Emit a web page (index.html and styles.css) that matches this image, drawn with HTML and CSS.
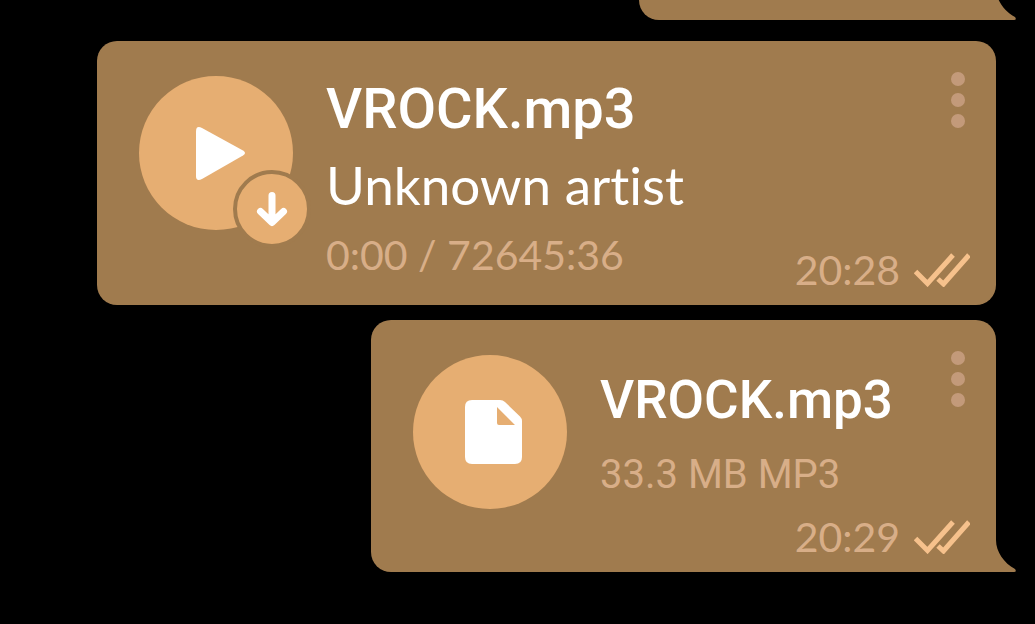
FILE: index.html
```html
<!DOCTYPE html>
<html lang="en">
<head>
<meta charset="utf-8">
<meta name="viewport" content="width=device-width, initial-scale=1">
<title>Chat</title>
<link rel="stylesheet" href="styles.css">
</head>
<body>
<main class="chat">
  <div class="bubble bubble-previous">
    <svg class="tail" width="20" height="32" viewBox="0 0 20 32" aria-hidden="true"><path d="M0 0C0 12 8 23 19 29Q21 32 18 32H0Z"/></svg>
  </div>

  <article class="bubble bubble-audio">
    <div class="media">
      <button class="round" type="button" aria-label="Play">
        <svg width="154" height="154" viewBox="0 0 154 154" aria-hidden="true"><path class="solid" d="M57 55.500Q57 49 63 52L104 74.500Q108 77 104 79.500L63 103Q57 106 57 100Z"/></svg>
      </button>
      <button class="download" type="button" aria-label="Download">
        <svg width="70" height="70" viewBox="0 0 70 70" aria-hidden="true"><path class="arrow" d="M35 21.500V47M23.500 37.500L35 48.500L46.500 37.500"/></svg>
      </button>
    </div>
    <div class="info">
      <h2 class="title title-audio">VROCK.mp3</h2>
      <p class="artist">Unknown artist</p>
      <p class="meta meta-audio">0:00 / 72645:36</p>
    </div>
    <button class="menu" type="button" aria-label="More options"><span class="dot"></span><span class="dot"></span><span class="dot"></span></button>
    <footer class="status">
      <time>20:28</time>
      <svg class="checks" width="56" height="34" viewBox="0 0 56 34" role="img" aria-label="Read"><path d="M1.500 18.500L13.500 30.500L39 2M24 26L29.500 31L55 2"/></svg>
    </footer>
  </article>

  <article class="bubble bubble-file">
    <div class="media">
      <button class="round" type="button" aria-label="Open file">
        <svg width="154" height="154" viewBox="0 0 154 154" aria-hidden="true"><path class="solid" fill-rule="evenodd" d="M59 45H87Q90 45 92 47L107 61.500Q109 63.500 109 66V102Q109 109 102 109H59Q52 109 52 102V52Q52 45 59 45ZM84 52V68Q84 70 86 70H102Z"/></svg>
      </button>
    </div>
    <div class="info">
      <h2 class="title">VROCK.mp3</h2>
      <p class="meta meta-file">33.3 MB MP3</p>
    </div>
    <button class="menu" type="button" aria-label="More options"><span class="dot"></span><span class="dot"></span><span class="dot"></span></button>
    <footer class="status">
      <time>20:29</time>
      <svg class="checks" width="56" height="34" viewBox="0 0 56 34" role="img" aria-label="Read"><path d="M1.500 18.500L13.500 30.500L39 2M24 26L29.500 31L55 2"/></svg>
    </footer>
    <svg class="tail" width="20" height="32" viewBox="0 0 20 32" aria-hidden="true"><path d="M0 0C0 12 8 23 19 29Q21 32 18 32H0Z"/></svg>
  </article>
</main>
</body>
</html>
```
FILE: styles.css
```css
* {
  box-sizing: border-box;
}

body {
  margin: 0;
  background: #000;
  color: #fff;
  font-family: Lato, "Liberation Sans", sans-serif;
}

.chat {
  display: flex;
  flex-direction: column;
  align-items: flex-end;
  padding: 0 39px 52px 97px;
  overflow: hidden;
}

.bubble {
  position: relative;
  display: grid;
  grid-template-columns: auto 1fr auto;
  padding: 31px 26px 11px 42px;
  border-radius: 20px;
  background: #a07b4e;
}

.bubble-previous {
  width: 357px;
  height: 40px;
  margin-top: -20px;
  margin-bottom: 21px;
  padding: 0;
  border-bottom-right-radius: 0;
}

.bubble-audio {
  align-self: stretch;
  margin-bottom: 15px;
}

.bubble-file {
  border-bottom-right-radius: 0;
}

.tail {
  position: absolute;
  left: 100%;
  bottom: 0;
  fill: #a07b4e;
}

button {
  display: block;
  padding: 0;
  border: 0;
  background: none;
}

.media {
  position: relative;
  grid-area: 1 / 1;
  align-self: start;
  margin: 4px 33px 0 0;
}

.round {
  border-radius: 50%;
  background: #e6ae72;
}

.round svg,
.download svg {
  display: block;
}

.solid {
  fill: #fff;
}

.download {
  position: absolute;
  right: -18px;
  bottom: -18px;
  border: 4px solid #a07b4e;
  border-radius: 50%;
  background: #e6ae72;
}

.arrow {
  fill: none;
  stroke: #fff;
  stroke-width: 7;
  stroke-linecap: round;
  stroke-linejoin: round;
}

.info {
  grid-area: 1 / 2;
  padding-top: 5px;
}

.bubble-audio .info {
  padding-bottom: 15px;
}

.bubble-file .info {
  padding: 17px 58px 62px 0;
}

.title {
  margin: 0;
  font-family: Roboto, "Liberation Sans", sans-serif;
  font-size: 53px;
  font-weight: 500;
  line-height: 64px;
}

.title-audio {
  font-size: 56px;
}

.artist {
  margin: 12px 0 0;
  font-size: 53px;
  line-height: 64px;
  font-variant-ligatures: none;
}

.meta {
  margin: 0;
  color: #d8ae88;
  font-size: 41px;
  line-height: 48px;
}

.meta-audio {
  margin-top: 14px;
}

.meta-file {
  margin-top: 19px;
  font-family: Roboto, "Liberation Sans", sans-serif;
  font-size: 40px;
}

.menu {
  display: grid;
  grid-area: 1 / 3;
  gap: 7px;
  align-self: start;
  margin-right: 5px;
}

.dot {
  width: 14px;
  height: 14px;
  border-radius: 50%;
  background: #c39a7a;
}

.status {
  grid-area: 1 / 2 / 2 / 4;
  place-self: end;
  display: flex;
  align-items: center;
  gap: 14px;
  color: #d8ae88;
  font-size: 41px;
  line-height: 48px;
}

.checks {
  fill: none;
  stroke: #f6c18c;
  stroke-width: 5;
}
```
